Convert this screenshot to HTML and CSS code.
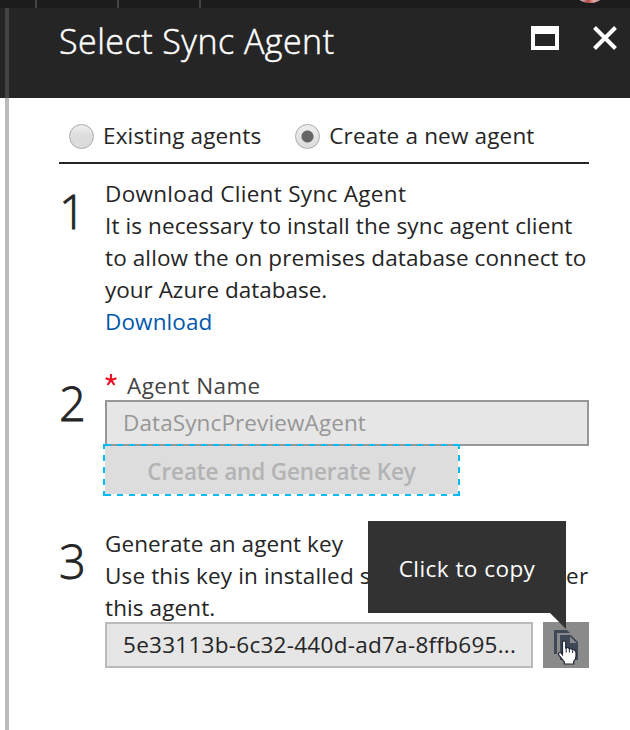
FILE: index.html
```html
<!DOCTYPE html>
<html lang="en">
<head>
<meta charset="utf-8">
<title>Select Sync Agent</title>
<link rel="stylesheet" href="styles.css">
</head>
<body>
<div class="topbar"><i></i><i></i><i></i><span class="avatar"></span></div>
<header class="header">
  <h1><span class="t title">Select Sync Agent</span></h1>
  <svg class="win" width="28" height="24" viewBox="0 0 28 24"><path fill="#fff" fill-rule="evenodd" d="M0 0h28v24H0zM4 8v12h20V8z"/></svg>
  <svg class="close" width="24" height="24" viewBox="0 0 24 24"><path d="M1.500 1.500l21 21M22.500 1.500l-21 21" stroke="#fff" stroke-width="4"/></svg>
</header>
<main class="blade">
  <div class="choices">
    <span class="radio"></span><span class="t c1">Existing agents</span>
    <span class="radio on"></span><span class="t c2">Create a new agent</span>
  </div>
  <section class="step one">
    <div class="num">1</div>
    <div class="content">
      <p><span class="t a1">Download Client Sync Agent</span></p>
      <p><span class="t a2">It is necessary to install the sync agent client</span></p>
      <p><span class="t a3">to allow the on premises database connect to</span></p>
      <p><span class="t a4">your Azure database.</span></p>
      <p><a class="t a5">Download</a></p>
    </div>
  </section>
  <section class="step two">
    <div class="num">2</div>
    <div class="content">
      <p class="label"><svg width="12" height="12" viewBox="0 0 12 12"><path d="M6 0v6M.6 4.200L6 6l5.400-1.800M2.600 11L6 6l3.400 5" stroke="#e81123" stroke-width="2.200" fill="none"/></svg><span class="t b1">Agent Name</span></p>
      <div class="field disabled"><span class="t b2">DataSyncPreviewAgent</span></div>
      <div class="generate"><span class="t b3">Create and Generate Key</span>
        <svg class="focus" width="357" height="52" viewBox="0 0 357 52"><path d="M2 1H357M2 51H357M1 -1V52M356 -1V52" stroke="#00bcf2" stroke-width="2" stroke-dasharray="6 6"/></svg>
      </div>
    </div>
  </section>
  <section class="step three">
    <div class="num">3</div>
    <div class="content">
      <p><span class="t d1">Generate an agent key</span></p>
      <p><span class="t d2">Use this key in installed sync agent to register</span></p>
      <p><span class="t d3">this agent.</span></p>
      <div class="keyrow">
        <div class="field"><span class="t d4">5e33113b-6c32-440d-ad7a-8ffb695...</span></div>
        <div class="copy">
          <svg width="46" height="46" viewBox="0 0 46 46">
            <path d="M11 8h13l3 3H14v21h-3z" fill="#3e4856"/>
            <path d="M17 13h11l7 7v18H17z" fill="#3e4856"/>
            <path d="M27 14.500v6.500h6.500z" fill="#8a8a8a"/>
            <g transform="translate(-1.800 .5)">
              <path d="M21.300 20q0-1.700 1.600-1.700t1.600 1.700v5.500q3-1 3.500.8 2.700-.7 3.300 1 3-.4 3.500 2.500v3.700q0 3-2.300 5.300v2.700h-9.500v-2.400l-5.200-6.300q-1.200-2.300.7-2.800 1.200-.2 2.800 2.200z" fill="#fff" stroke="#1d2433" stroke-width="1.200"/>
              <path d="M25 25v5M28.200 26.500V30M31.400 28v2.500" stroke="#1d2433" stroke-width="1"/>
            </g>
          </svg>
          <div class="tip"><span class="t e1">Click to copy</span></div>
        </div>
      </div>
    </div>
  </section>
</main>
</body>
</html>
```
FILE: styles.css
```css
* { box-sizing: border-box; }
body { margin: 0; width: 630px; height: 730px; overflow: hidden; background: #fff; color: #252525; font: 22.5px/32px "Open Sans", "Noto Sans", sans-serif; }
p, h1 { margin: 0; white-space: nowrap; }
svg { display: block; }
.t { white-space: nowrap; }
.title { letter-spacing: .48px; -webkit-text-stroke: .5px #fff; }
.c1 { letter-spacing: .14px; }
.c2 { letter-spacing: .17px; }
.a1 { letter-spacing: .31px; }
.a2, .a3, .a5, .b2, .d3 { letter-spacing: .11px; }
.b1 { letter-spacing: .4px; }
.b3 { letter-spacing: -.13px; }
.d1 { letter-spacing: .07px; }
.d2 { letter-spacing: .15px; }
.d4 { letter-spacing: .27px; }
.e1 { letter-spacing: .46px; }
.topbar { height: 8px; background: #1c1c1c; display: flex; gap: 80px; padding-left: 35px; overflow: hidden; position: relative; }
.topbar i { width: 2px; background: #444; }
.avatar { position: absolute; left: 570px; top: -37px; width: 40px; height: 40px; border-radius: 50%; background: linear-gradient(90deg, #c9a9bd 30%, #b5453f 45%, #e8a9a4 60%, #b58aa5 75%); }
.header { height: 90px; background: #252525; border-left: 4px solid #444; margin-left: 5px; box-shadow: -5px 0 #252525; display: flex; padding: 18px 13px 0 50px; color: #fff; }
.header h1 { font-size: 34px; line-height: 30px; font-weight: 300; flex: 1; }
.win { margin-right: 34px; }
.blade { height: 632px; margin-left: 5px; border-left: 4px solid #bbb; padding: 0 41px 0 50px; }
.choices { height: 66px; border-bottom: 2px solid #252525; padding: 12px 0 0 10px; display: flex; align-items: center; }
.radio { width: 25px; height: 25px; border-radius: 50%; border: 1px solid #aaa; background: linear-gradient(#eee, #dcdcdc 50%); margin-right: 9px; flex: none; }
.radio.on { background: radial-gradient(circle, #666 0 5.500px, transparent 6.500px), linear-gradient(#eee, #dcdcdc); margin-left: 34px; }
.step { display: flex; }
.one { margin-top: 14px; height: 192px; }
.two { height: 158px; }
.num { width: 46px; font-size: 47px; font-weight: 300; line-height: 66px; flex: none; -webkit-text-stroke: .8px #252525; }
.content { width: 484px; }
.content a { color: #0058ad; }
.label { display: flex; height: 30px; color: #444; }
.label svg { margin: 4px 10px 0 0; }
.field { height: 46px; border: 2px solid #bababa; background: #e6e6e6; padding: 0 16px; line-height: 42px; white-space: nowrap; }
.disabled { border-color: #979797; color: #979797; }
.generate { position: relative; width: 353px; height: 48px; background: #ddd; color: #b3b3b3; font-weight: 600; text-align: center; line-height: 52px; }
.focus { position: absolute; left: -2px; top: -2px; }
.keyrow { display: flex; gap: 10px; margin-top: -2px; }
.keyrow .field { width: 428px; }
.copy { position: relative; width: 46px; height: 46px; background: #8a8a8a; }
.tip { position: absolute; right: 23px; bottom: 55px; width: 198px; height: 92px; background: #323232; color: #fff; text-align: center; line-height: 96px; }
.tip::after { content: ""; position: absolute; right: 0; top: 92px; border-top: 16px solid #323232; border-left: 16px solid transparent; }
```
